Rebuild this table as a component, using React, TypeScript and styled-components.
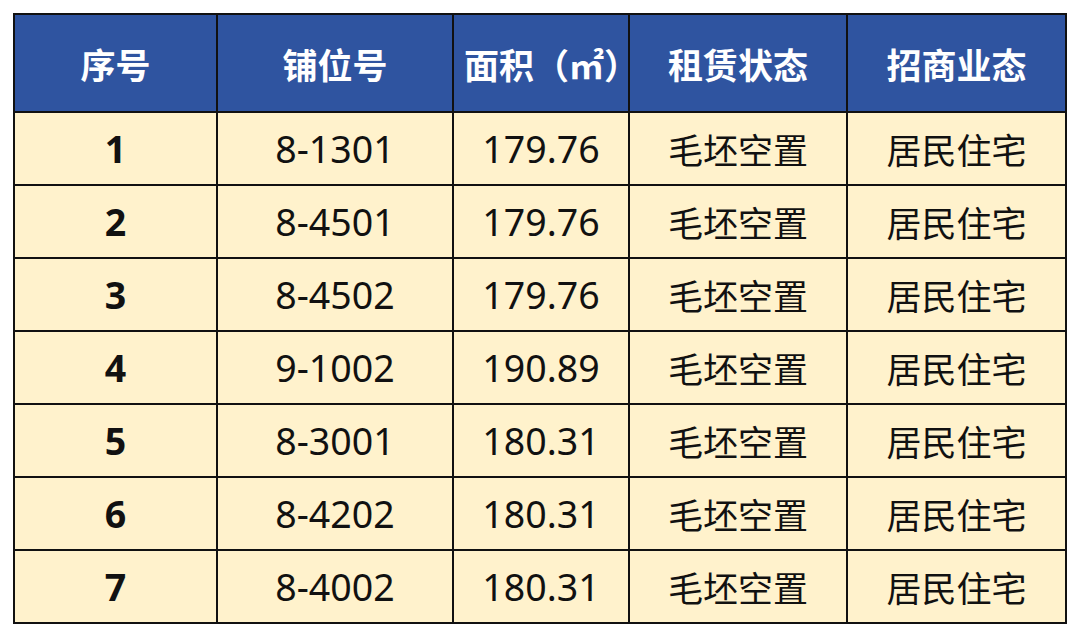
import styled, { createGlobalStyle } from "styled-components";

const GlobalStyle = createGlobalStyle`
  html, body {
    margin: 0;
    padding: 0;
    background: #fff;
  }
  body {
    font-family: "Noto Sans", "Noto Sans CJK SC", sans-serif;
  }
`;

type Row = {
  no: number;
  unit: string;
  area: string;
  status: string;
  type: string;
};

const rows: Row[] = [
  { no: 1, unit: "8-1301", area: "179.76", status: "毛坯空置", type: "居民住宅" },
  { no: 2, unit: "8-4501", area: "179.76", status: "毛坯空置", type: "居民住宅" },
  { no: 3, unit: "8-4502", area: "179.76", status: "毛坯空置", type: "居民住宅" },
  { no: 4, unit: "9-1002", area: "190.89", status: "毛坯空置", type: "居民住宅" },
  { no: 5, unit: "8-3001", area: "180.31", status: "毛坯空置", type: "居民住宅" },
  { no: 6, unit: "8-4202", area: "180.31", status: "毛坯空置", type: "居民住宅" },
  { no: 7, unit: "8-4002", area: "180.31", status: "毛坯空置", type: "居民住宅" },
];

const colWidths = [203, 236, 176, 218, 219];

function App() {
  return (
    <>
      <GlobalStyle />
      <Page>
        <Table>
          <colgroup>
            {colWidths.map((w, i) => (
              <col key={i} style={{ width: w }} />
            ))}
          </colgroup>
          <thead>
            <tr>
              <HeadCell>序号</HeadCell>
              <HeadCell>铺位号</HeadCell>
              <HeadCell $indent={10}>面积（㎡）</HeadCell>
              <HeadCell>租赁状态</HeadCell>
              <HeadCell>招商业态</HeadCell>
            </tr>
          </thead>
          <tbody>
            {rows.map((r) => (
              <BodyRow key={r.no}>
                <Cell $bold>{r.no}</Cell>
                <Cell>{r.unit}</Cell>
                <Cell>{r.area}</Cell>
                <Cell $cjk>{r.status}</Cell>
                <Cell $cjk>{r.type}</Cell>
              </BodyRow>
            ))}
          </tbody>
        </Table>
      </Page>
    </>
  );
}

export default App;

const Page = styled.div`
  width: 1080px;
  height: 636px;
  padding: 13px 0 0 13px;
  box-sizing: border-box;
  background: #fff;
`;

const Table = styled.table`
  width: 1053px;
  table-layout: fixed;
  border-collapse: collapse;
  border: 2px solid #333;
`;

const HeadCell = styled.th<{ $indent?: number }>`
  height: 96px;
  padding: 0 0 0 ${(p) => p.$indent ?? 0}px;
  background: #2f54a0;
  color: #fff;
  font-family: "Noto Sans CJK SC", sans-serif;
  font-size: 35px;
  font-weight: 700;
  text-align: center;
  vertical-align: middle;
  border: 2px solid #111;
  white-space: nowrap;
`;

const BodyRow = styled.tr`
  height: 73px;
`;

const Cell = styled.td<{ $bold?: boolean; $cjk?: boolean }>`
  padding: 0;
  background: #fff2cc;
  color: #111;
  font-family: ${(p) =>
    p.$cjk ? `"Noto Sans CJK SC", sans-serif` : `"Noto Sans", "Noto Sans CJK SC", sans-serif`};
  font-size: ${(p) => (p.$cjk ? 35 : 37.5)}px;
  font-weight: ${(p) => (p.$bold ? 700 : 400)};
  text-align: center;
  vertical-align: middle;
  border: 2px solid #111;
  line-height: 1;
`;
